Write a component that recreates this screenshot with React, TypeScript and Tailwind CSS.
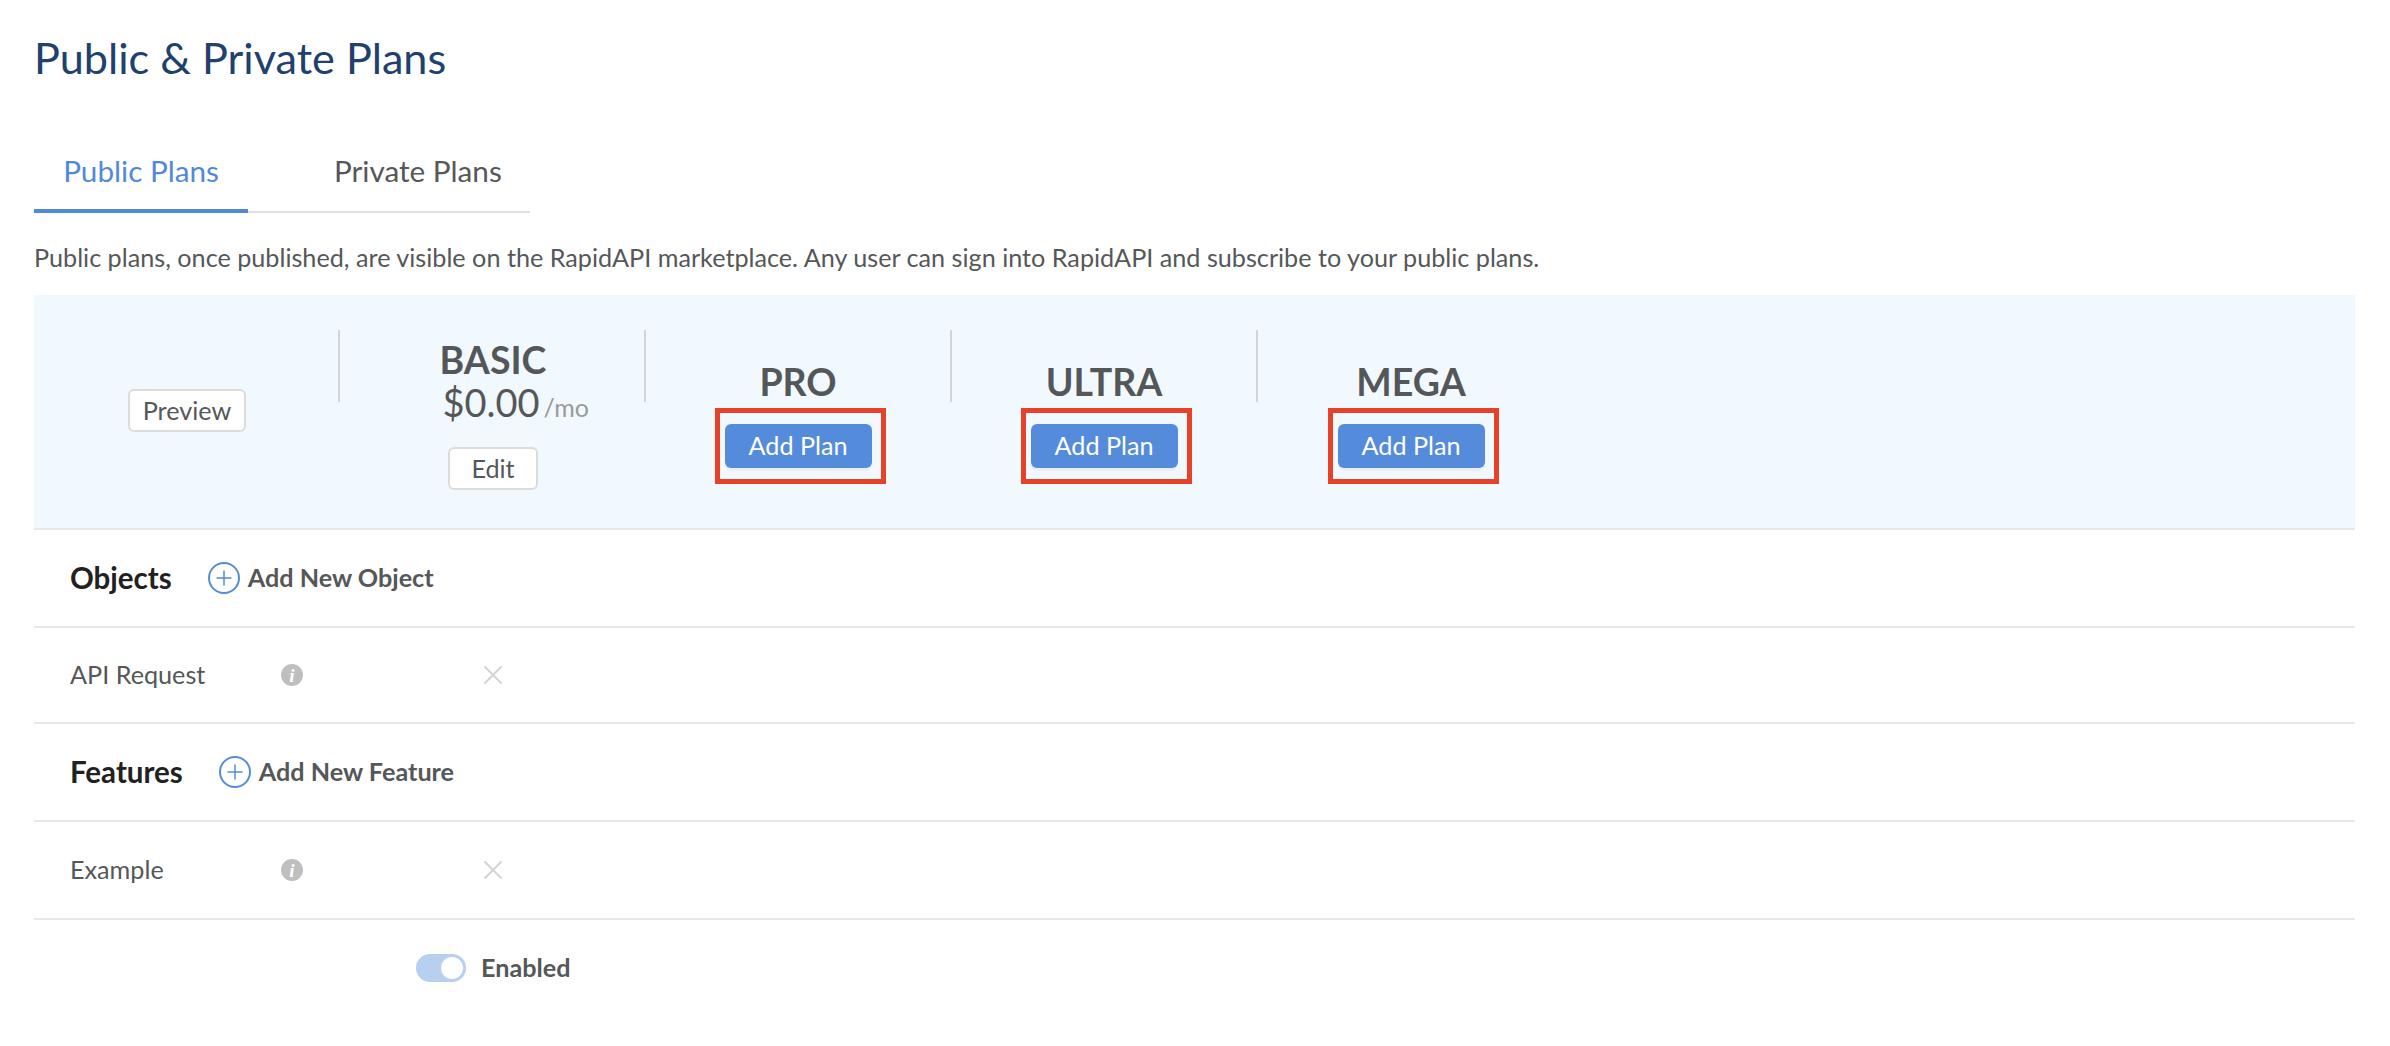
import { X, Plus } from 'lucide-react';

const plans = ['PRO', 'ULTRA', 'MEGA'];

function InfoDot() {
  return (
    <span className="flex h-[22px] w-[22px] items-center justify-center rounded-full bg-[#bfbfbf]">
      <span className="font-['Liberation_Serif',serif] text-[19px] leading-none font-bold text-white italic">i</span>
    </span>
  );
}

function SectionRow({ title, action, height }: { title: string; action: string; height: string }) {
  return (
    <div className={`flex items-center border-b-2 border-[#e8e8e8] pl-[36px] ${height}`}>
      <span className="text-[29.5px] font-bold text-[#212121]">{title}</span>
      <span className="ml-[36px] flex items-center">
        <span className="mr-[8px] flex h-[32px] w-[32px] items-center justify-center rounded-full border-2 border-[#548cdb]">
          <Plus className="h-[24px] w-[24px] text-[#548cdb]" strokeWidth={1.5} />
        </span>
        <span className="text-[25.2px] font-bold text-[#555759]">{action}</span>
      </span>
    </div>
  );
}

function ItemRow({ label, height }: { label: string; height: string }) {
  return (
    <div className={`flex items-center border-b-2 border-[#e8e8e8] pl-[36px] ${height}`}>
      <span className="w-[211px] text-[25.2px] text-[#555759]">{label}</span>
      <InfoDot />
      <X className="ml-[174px] h-[32px] w-[32px] text-[#d4d4d4]" strokeWidth={1.4} />
    </div>
  );
}

export default function App() {
  return (
    <div className="h-[1046px] w-[2390px] overflow-hidden bg-white pr-[35px] pl-[34px] font-['Lato',sans-serif]">
      <h1 className="pt-[28px] text-[43.2px] leading-[58px] font-normal text-[#20406d]">Public &amp; Private Plans</h1>

      <div className="mt-[53px] flex h-[74px] w-[496px] border-b-2 border-[#e0e0e0]">
        <div className="-mb-[2px] flex w-[214px] items-center justify-center border-b-4 border-[#5089dc] pb-[5px] text-[29.7px] text-[#5089dc]">
          Public Plans
        </div>
        <div className="flex items-center pb-[7px] pl-[86px] text-[29.7px] text-[#555759]">Private Plans</div>
      </div>

      <p className="mt-[28px] text-[25.2px] leading-[32px] text-[#555759]">
        Public plans, once published, are visible on the RapidAPI marketplace. Any user can sign into RapidAPI and subscribe to your public plans.
      </p>

      <div className="mt-[22px] flex h-[235px] border-b-2 border-[#e8e8e8] bg-[#f2f9fe] pt-[35px]">
        <div className="flex h-[72px] w-[306px] shrink-0 flex-col items-center border-r-2 border-[#d2d5d8] pl-[2px]">
          <button className="mt-[59px] h-[43px] w-[118px] shrink-0 rounded-[6px] border-2 border-[#dcdcdc] bg-white text-[25.2px] leading-none text-[#555759]">
            Preview
          </button>
        </div>
        <div className="flex h-[72px] w-[306px] shrink-0 flex-col items-center border-r-2 border-[#d2d5d8] pl-[2px]">
          <div className="shrink-0 pt-[8px] text-[37.5px] leading-[44px] font-bold text-[#54575a]">BASIC</div>
          <div className="-mt-[2px] flex shrink-0 items-baseline text-[38px] leading-[44px] text-[#54575a]">
            $0.00
            <span className="w-0 pl-[4px] text-[25px] whitespace-nowrap text-[#9a9a9a]">/mo</span>
          </div>
          <button className="mt-[18px] h-[43px] w-[90px] shrink-0 rounded-[6px] border-2 border-[#dcdcdc] bg-white text-[25.2px] leading-none text-[#555759]">
            Edit
          </button>
        </div>
        {plans.map((plan, i) => (
          <div
            key={plan}
            className={`flex h-[72px] w-[306px] shrink-0 flex-col items-center ${i < 2 ? 'border-r-2 border-[#d2d5d8]' : ''}`}
          >
            <div className="shrink-0 pt-[30px] text-[37.5px] leading-[44px] font-bold text-[#54575a]">{plan}</div>
            <div className="mt-[4px] ml-[4px] flex h-[76px] w-[171px] shrink-0 items-center border-[5px] border-[#e8412a] pl-[5px]">
              <button className="h-[44px] w-[147px] rounded-[6px] bg-[#548cdb] text-[25.2px] leading-none text-white shadow-[0_3px_0_#e9eff8]">
                Add Plan
              </button>
            </div>
          </div>
        ))}
      </div>

      <SectionRow title="Objects" action="Add New Object" height="h-[98px]" />
      <ItemRow label="API Request" height="h-[96px]" />
      <SectionRow title="Features" action="Add New Feature" height="h-[98px]" />
      <ItemRow label="Example" height="h-[98px]" />

      <div className="flex h-[95px] items-center pl-[382px]">
        <span className="flex h-[28px] w-[50px] items-center justify-end rounded-full bg-[#b8d0f0] pr-[3px]">
          <span className="h-[22px] w-[22px] rounded-full bg-white" />
        </span>
        <span className="ml-[15px] text-[25.2px] font-bold text-[#555759]">Enabled</span>
      </div>
    </div>
  );
}
